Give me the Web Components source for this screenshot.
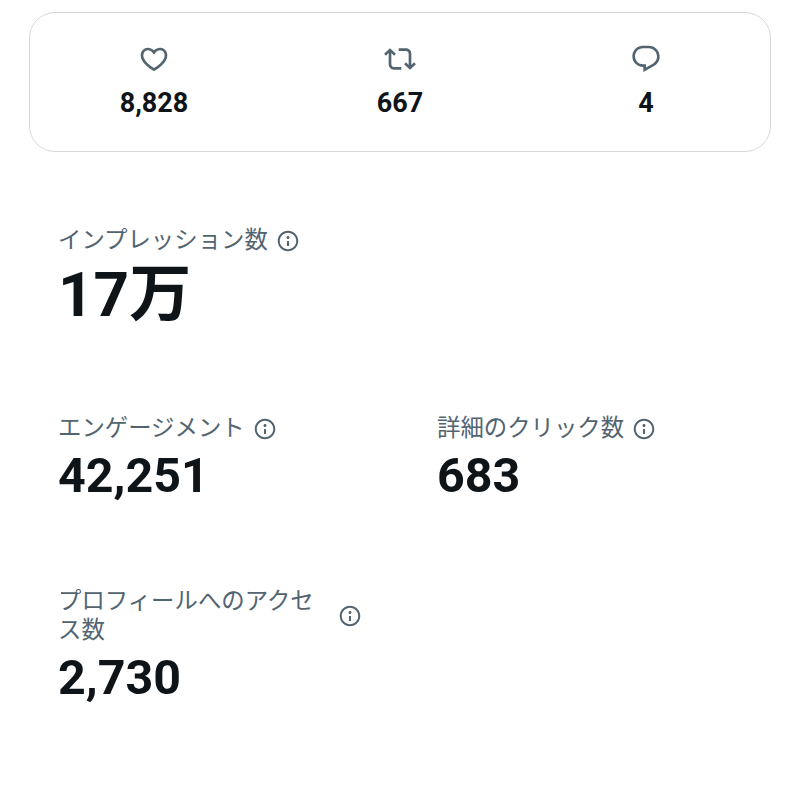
<!DOCTYPE html>
<html lang="ja">
<head>
<meta charset="utf-8">
<title>analytics</title>
<style>
  html, body { margin: 0; background: #fff; }
  body { font-family: Roboto, "Noto Sans CJK JP", sans-serif; color: #0f1419; }
</style>
</head>
<body>
<analytics-page>
  <engagement-card>
    <engagement-item icon="like">8,828</engagement-item>
    <engagement-item icon="repost">667</engagement-item>
    <engagement-item icon="reply">4</engagement-item>
  </engagement-card>
  <stat-grid>
    <stat-item class="wide" size="big" value="17万">インプレッション数</stat-item>
    <stat-item value="42,251">エンゲージメント</stat-item>
    <stat-item value="683">詳細のクリック数</stat-item>
    <stat-item value="2,730">プロフィールへのアクセス数</stat-item>
  </stat-grid>
</analytics-page>

<script>
(() => {
  const ICONS = {
    like: 'M16.697 5.5c-1.222-.06-2.679.51-3.89 2.16l-.805 1.09-.806-1.09C9.984 6.01 8.526 5.44 7.304 5.5c-1.243.07-2.349.78-2.91 1.91-.552 1.12-.633 2.78.479 4.82 1.074 1.97 3.257 4.27 7.129 6.61 3.87-2.34 6.052-4.64 7.126-6.61 1.111-2.04 1.03-3.7.477-4.82-.561-1.13-1.666-1.84-2.908-1.91zm4.187 7.69c-1.351 2.48-4.001 5.12-8.379 7.67l-.503.3-.504-.3c-4.379-2.55-7.029-5.19-8.382-7.67-1.36-2.5-1.41-4.86-.514-6.67.887-1.79 2.647-2.91 4.601-3.01 1.651-.09 3.368.56 4.798 2.01 1.429-1.45 3.146-2.1 4.796-2.01 1.954.1 3.714 1.22 4.601 3.01.896 1.81.846 4.17-.514 6.67z',
    repost: 'M4.5 3.88l4.432 4.14-1.364 1.46L5.5 7.55V16c0 1.1.896 2 2 2H13v2H7.5c-2.209 0-4-1.79-4-4V7.55L1.432 9.48.068 8.02 4.5 3.88zM16.5 6H11V4h5.5c2.209 0 4 1.79 4 4v8.45l2.068-1.93 1.364 1.46-4.432 4.14-4.432-4.14 1.364-1.46 2.068 1.93V8c0-1.1-.896-2-2-2z',
    reply: 'M1.751 10c0-4.42 3.584-8 8.005-8h4.366c4.49 0 8.129 3.64 8.129 8.13 0 2.96-1.607 5.68-4.196 7.11l-8.054 4.46v-3.69h-.067c-4.49.1-8.183-3.51-8.183-8.01zm8.005-6c-3.317 0-6.005 2.69-6.005 6 0 3.37 2.77 6.08 6.138 6.01l.351-.01h1.761v2.3l5.087-2.81c1.951-1.08 3.163-3.13 3.163-5.36 0-3.39-2.744-6.13-6.129-6.13H9.756z',
    info: 'M13.5 8.5c0 .83-.67 1.5-1.5 1.5s-1.5-.67-1.5-1.5S11.17 7 12 7s1.5.67 1.5 1.5zM13 17v-5h-2v5h2zm-1 5.25c5.66 0 10.25-4.59 10.25-10.25S17.66 1.75 12 1.75 1.75 6.34 1.75 12 6.34 22.25 12 22.25zM20.25 12c0 4.56-3.69 8.25-8.25 8.25S3.75 16.56 3.75 12 7.44 3.75 12 3.75 20.25 7.44 20.25 12z'
  }

  class AnalyticsPage extends HTMLElement {
    constructor () {
      super()
      this.attachShadow({ mode: 'open' }).innerHTML = `
        <style>
          :host { display: block; padding: 12px 29px 0; }
        </style>
        <slot></slot>
      `
    }
  }

  class EngagementCard extends HTMLElement {
    constructor () {
      super()
      this.attachShadow({ mode: 'open' }).innerHTML = `
        <style>
          :host {
            display: grid;
            grid-template-columns: repeat(3, 1fr);
            box-sizing: border-box;
            height: 140px;
            align-items: start;
            padding: 30px 1px 0;
            border: 1.5px solid #d6d9db;
            border-radius: 26px;
          }
        </style>
        <slot></slot>
      `
    }
  }

  class EngagementItem extends HTMLElement {
    constructor () {
      super()
      const d = ICONS[this.getAttribute('icon')]
      this.attachShadow({ mode: 'open' }).innerHTML = `
        <style>
          :host {
            display: flex;
            flex-direction: column;
            align-items: center;
            font-size: 27px;
            font-weight: 700;
            line-height: 30px;
            color: #0f1419;
          }
          svg { width: 32px; height: 32px; fill: #536471; margin-bottom: 13px; }
        </style>
        <svg viewBox="0 0 24 24"><path d="${d}"/></svg>
        <slot></slot>
      `
    }
  }

  class StatGrid extends HTMLElement {
    constructor () {
      super()
      this.attachShadow({ mode: 'open' }).innerHTML = `
        <style>
          :host {
            display: grid;
            grid-template-columns: 379px 1fr;
            padding: 74px 0 0 29px;
            row-gap: 83px;
          }
          ::slotted(.wide) { grid-column: 1 / -1; }
        </style>
        <slot></slot>
      `
    }
  }

  class StatItem extends HTMLElement {
    constructor () {
      super()
      const big = this.getAttribute('size') === 'big'
      this.attachShadow({ mode: 'open' }).innerHTML = `
        <style>
          :host { display: block; }
          .label {
            display: flex;
            align-items: center;
            gap: 8px;
            font-size: 23.4px;
            line-height: 29px;
            color: #536471;
          }
          .text { max-width: 272px; }
          svg { width: 24px; height: 24px; fill: #536471; flex: none; }
          .value {
            margin-top: ${big ? 4 : 5}px;
            font-size: ${big ? 62 : 48.4}px;
            line-height: ${big ? 72 : 56}px;
            font-weight: 700;
            color: #0f1419;
          }
        </style>
        <div class="label">
          <div class="text"><slot></slot></div>
          <svg viewBox="0 0 24 24"><path d="${ICONS.info}"/></svg>
        </div>
        <div class="value">${this.getAttribute('value')}</div>
      `
    }
  }

  customElements.define('analytics-page', AnalyticsPage)
  customElements.define('engagement-card', EngagementCard)
  customElements.define('engagement-item', EngagementItem)
  customElements.define('stat-grid', StatGrid)
  customElements.define('stat-item', StatItem)
})()
</script>
</body>
</html>
